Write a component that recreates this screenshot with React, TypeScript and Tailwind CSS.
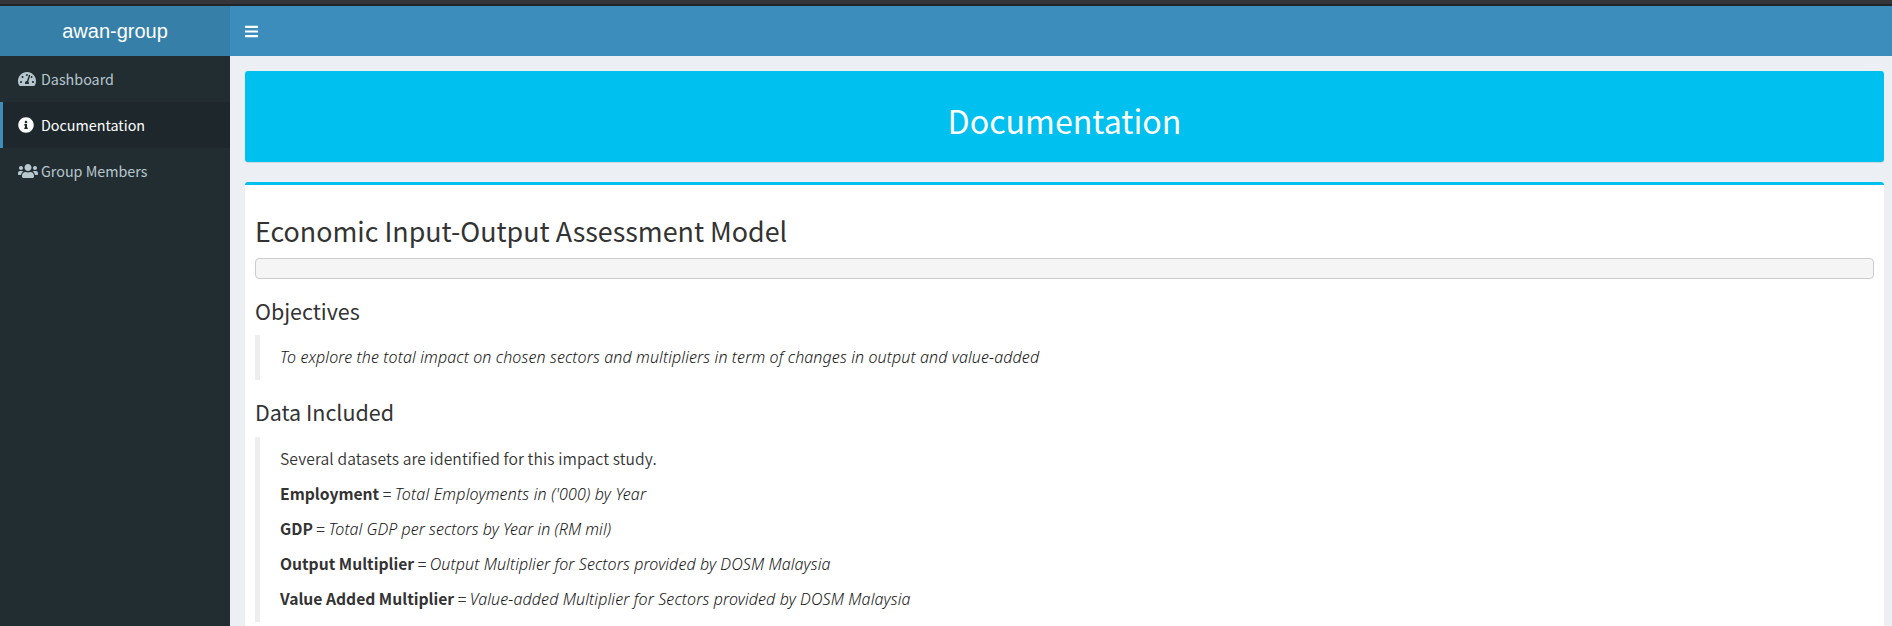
import type { ReactNode } from "react";
import { FaBars, FaInfoCircle, FaTachometerAlt, FaUsers } from "react-icons/fa";

const menu = [
  { label: "Dashboard", icon: FaTachometerAlt, size: "h-4 w-[18px]", active: false },
  { label: "Documentation", icon: FaInfoCircle, size: "size-4", active: true },
  { label: "Group Members", icon: FaUsers, size: "h-4 w-5", active: false },
];

const datasets = [
  { name: "Employment", text: "Total Employments in ('000) by Year", spacing: "tracking-[0.19px]" },
  { name: "GDP", text: "Total GDP per sectors by Year in (RM mil)", spacing: "tracking-[0.04px]" },
  {
    name: "Output Multiplier",
    text: "Output Multiplier for Sectors provided by DOSM Malaysia",
    spacing: "tracking-[0.1px]",
  },
  {
    name: "Value Added Multiplier",
    text: "Value-added Multiplier for Sectors provided by DOSM Malaysia",
    spacing: "tracking-[0.12px]",
  },
];

function Em({ spacing, children }: { spacing: string; children: ReactNode }) {
  return (
    <em className={`font-['Noto_Sans',sans-serif] text-[16px] leading-none font-light text-[#161616] ${spacing}`}>
      {children}
    </em>
  );
}

function Quote({ children }: { children: ReactNode }) {
  return (
    <blockquote className="flex flex-col gap-[10px] border-l-[5px] border-[#eee] px-5 pt-[9px] pb-[11px] text-[15.66px] leading-[25px]">
      {children}
    </blockquote>
  );
}

export default function App() {
  return (
    <div className="flex h-[626px] flex-col overflow-hidden bg-[#ecf0f5] font-['Noto_Sans_CJK_SC',sans-serif] text-[#333]">
      <div className="h-[6px] shrink-0 border-b-2 border-[#232427] bg-[#35363a]" />
      <header className="flex h-[50px] shrink-0 text-white">
        <div className="flex w-[230px] items-center justify-center bg-[#367fa9] font-['Liberation_Sans',sans-serif] text-[20px]">
          awan-group
        </div>
        <div className="flex flex-1 items-center bg-[#3c8dbc] pl-[15px]">
          <FaBars className="h-[15px] w-[13.1px]" />
        </div>
      </header>
      <div className="flex min-h-0 flex-1">
        <aside className="w-[230px] shrink-0 bg-[#222d32]">
          {menu.map(({ label, icon: Icon, size, active }) => (
            <a
              key={label}
              className={
                active
                  ? "flex h-[46px] items-center border-l-[3px] border-[#3c8dbc] bg-[#1e282c] pl-[15px] text-white"
                  : "flex h-[46px] items-center border-l-[3px] border-transparent pl-[15px] text-[#b8c7ce]"
              }
            >
              <span className="flex w-[23px]">
                <Icon className={size} />
              </span>
              <span className="text-[14.32px] leading-[22px]">{label}</span>
            </a>
          ))}
        </aside>
        <main className="flex-1 pt-[15px] pr-2 pl-[15px]">
          <div className="mb-5 h-[91px] rounded-[3px] bg-[#00c0ef] pt-[30px] text-center shadow-[0_1px_1px_rgba(0,0,0,0.1)]">
            <h1 className="text-[32.2px] leading-[39.6px] text-white">Documentation</h1>
          </div>
          <section className="h-[500px] rounded-[3px] border-t-[3px] border-[#00c0ef] bg-white px-[10px] pt-[29px]">
            <h2 className="mb-[11px] text-[26.85px] leading-[33px]">Economic Input-Output Assessment Model</h2>
            <div className="h-[21px] rounded-[4px] border border-[#ccc] bg-[#f5f5f5]" />
            <h3 className="mt-[19px] mb-[11px] text-[21.48px] leading-[26.4px]">Objectives</h3>
            <Quote>
              <p className="h-[25px]">
                <Em spacing="tracking-[0.12px]">
                  To explore the total impact on chosen sectors and multipliers in term of changes in output and
                  value-added
                </Em>
              </p>
            </Quote>
            <h3 className="mt-[19px] mb-[11px] text-[21.48px] leading-[26.4px]">Data Included</h3>
            <Quote>
              <p className="h-[25px] font-[350] tracking-[0.1px]">
                Several datasets are identified for this impact study.
              </p>
              {datasets.map((d) => (
                <p key={d.name} className="h-[25px] font-[350]">
                  <strong className="font-bold">{d.name}</strong> = <Em spacing={d.spacing}>{d.text}</Em>
                </p>
              ))}
            </Quote>
          </section>
        </main>
      </div>
    </div>
  );
}
